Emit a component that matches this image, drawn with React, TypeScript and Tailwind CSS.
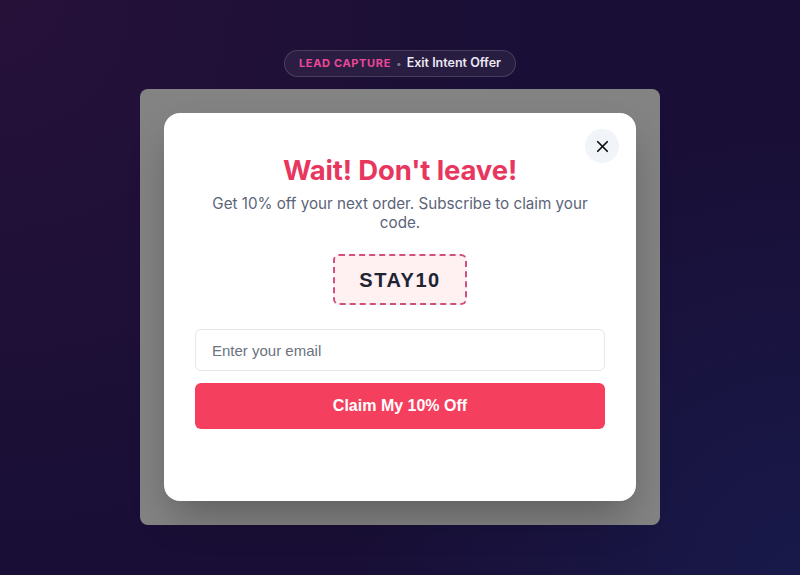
import { useState } from "react";
import { X } from "lucide-react";

// Exit intent popup preview: a tag on top, then the dimmed page with the modal over it
export default function App() {
  const [email, setEmail] = useState("");

  return (
    <div className="min-h-screen w-full flex flex-col items-center justify-center bg-[#190f36] bg-[radial-gradient(circle_at_0%_0%,#261139_0%,transparent_55%),radial-gradient(circle_at_100%_100%,#18194a_0%,transparent_45%)] font-['Inter',sans-serif]">
      {/* tag */}
      <div className="flex items-center h-[27px] px-[14px] gap-[5px] rounded-full border border-white/15 bg-white/[0.06]">
        <span className="text-[11px] font-bold tracking-[0.06em] text-[#ec4899]">LEAD CAPTURE</span>
        <span className="text-[10px] text-[#7c7894]">•</span>
        <span className="text-[12.5px] font-semibold text-[#ece8f4]">Exit Intent Offer</span>
      </div>

      {/* dimmed backdrop */}
      <div className="mt-3 w-[520px] rounded-lg bg-[#838383] p-6">
        <div className="relative bg-white rounded-2xl shadow-[0_20px_40px_-8px_rgba(0,0,0,0.3)] px-[31px] pt-10 pb-[72px] flex flex-col items-center">
          <button className="absolute top-4 right-[17px] w-[34px] h-[34px] rounded-full bg-[#f1f4f9] flex items-center justify-center text-[#111]">
            <X size={19} strokeWidth={2.2} />
          </button>

          <h2 className="text-[27.5px] leading-[34px] font-bold text-[#e8375e] tracking-[-0.005em]">
            Wait! Don't leave!
          </h2>
          <p className="mt-[7px] text-[15.2px] leading-[19px] text-[#5b6478] text-center">
            Get 10% off your next order. Subscribe to claim your code.
          </p>

          <div className="mt-[22px] h-[51px] w-[134px] rounded-md border-2 border-dashed border-[#d0527a] bg-[#fff0f2] flex items-center justify-center">
            <span className="font-['Liberation_Sans',sans-serif] text-[20px] font-bold tracking-[1.5px] text-[#1f2433]">
              STAY10
            </span>
          </div>

          <input
            type="email"
            value={email}
            onChange={(e) => setEmail(e.target.value)}
            placeholder="Enter your email"
            className="mt-[24px] w-full h-[42px] rounded-md border border-[#e5e7eb] px-4 font-['Liberation_Sans',sans-serif] text-[15px] text-[#1f2433] placeholder:text-[#6b7280] outline-none"
          />
          <button className="mt-3 w-full h-[46px] rounded-md bg-[#f43f5e] font-['Liberation_Sans',sans-serif] text-[16px] font-bold text-white">
            Claim My 10% Off
          </button>
        </div>
      </div>
    </div>
  );
}
